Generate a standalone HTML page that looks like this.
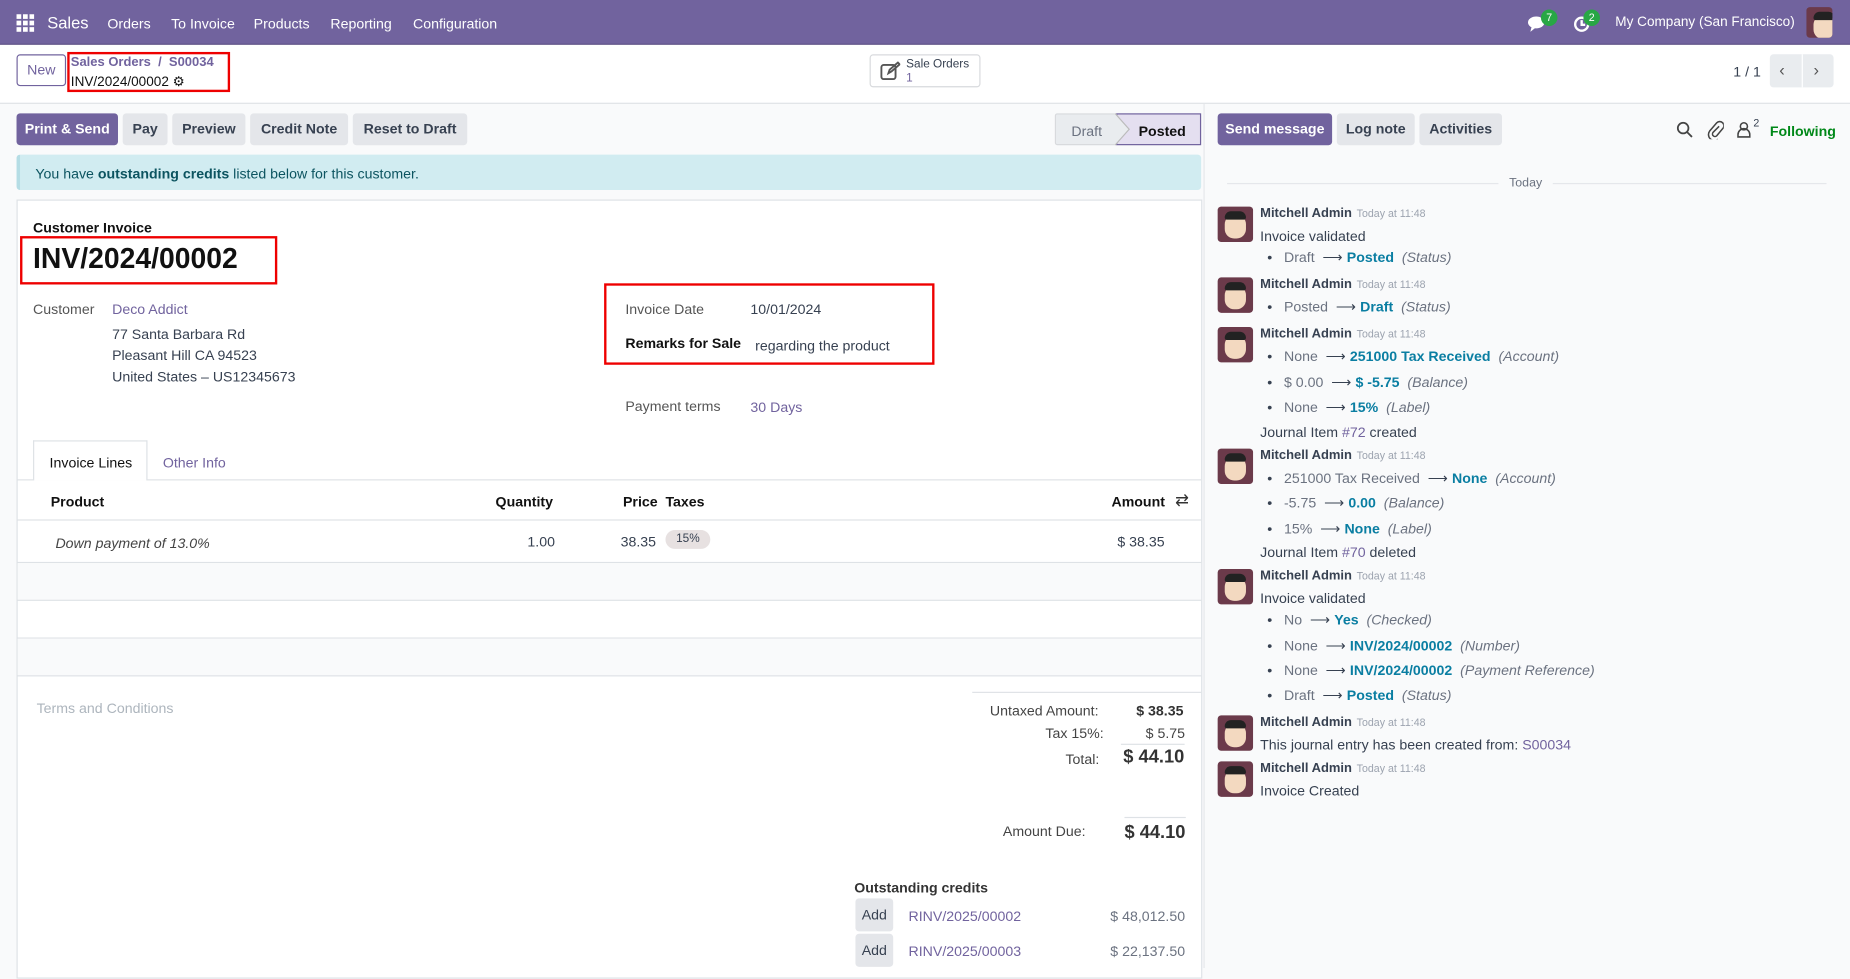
<!DOCTYPE html>
<html><head><meta charset="utf-8"><style>
*{box-sizing:border-box;margin:0;padding:0}
html,body{width:1850px;height:968px;overflow:hidden;background:#f9fafb}
#w{position:absolute;left:0;top:0;width:1568px;height:820px;transform:scale(1.1799,1.1805);transform-origin:0 0;font-family:"Liberation Sans",sans-serif;font-size:12px;color:#374151;background:#f9fafb}
.a{position:absolute;white-space:nowrap}
.nav{left:0;top:0;width:1568px;height:38px;background:#71639e;border-bottom:1px solid #5d5184}
.nav .a{color:#fff;top:13px;font-size:12px}
.btn{position:absolute;height:27px;line-height:27px;border-radius:3px;background:#e4e6ea;color:#374151;font-weight:bold;text-align:center;font-size:12px}
.pri{background:#71639e;color:#fff}
.lnk{color:#71639e}
.teal{color:#0a7ea2;font-weight:bold}
.it{font-style:italic;color:#6b7280}
.grey{color:#6b7280}
.av{position:absolute;left:1032px;width:30px;height:30px;border-radius:3px;background:#6b3a4a;overflow:hidden}
.av:before{content:"";position:absolute;left:6px;top:7px;width:18px;height:20px;border-radius:8px;background:#f3d9c0}
.av:after{content:"";position:absolute;left:6px;top:4px;width:18px;height:7px;border-radius:6px 6px 2px 2px;background:#222}
.nm{font-weight:bold;color:#374151}
.tm{font-size:9px;color:#9ca3af;font-weight:normal;margin-left:4px}
.bul:before{content:"•";margin-right:10px;color:#374151}
.red{position:absolute;border:2px solid #e00}
.hl{position:absolute;left:14px;width:1004px;height:1px;background:#dee2e6}
</style></head><body><div id="w">
<div class="a nav">
 <svg class="a" style="left:14px;top:12px" width="15" height="15" viewBox="0 0 15 15" fill="#fff"><rect x="0" y="0" width="4" height="4"/><rect x="5.5" y="0" width="4" height="4"/><rect x="11" y="0" width="4" height="4"/><rect x="0" y="5.5" width="4" height="4"/><rect x="5.5" y="5.5" width="4" height="4"/><rect x="11" y="5.5" width="4" height="4"/><rect x="0" y="11" width="4" height="4"/><rect x="5.5" y="11" width="4" height="4"/><rect x="11" y="11" width="4" height="4"/></svg>
 <div class="a" style="left:40px;top:11px;font-size:14px">Sales</div>
 <div class="a" style="left:91px">Orders</div>
 <div class="a" style="left:145px">To Invoice</div>
 <div class="a" style="left:215px">Products</div>
 <div class="a" style="left:280px">Reporting</div>
 <div class="a" style="left:350px">Configuration</div>
 <svg class="a" style="left:1295px;top:13px" width="16" height="14" viewBox="0 0 16 14" fill="#fff"><ellipse cx="7" cy="6" rx="7" ry="5"/><path d="M3 10 L2 14 L7 10Z"/></svg>
 <div class="a" style="left:1306px;top:8px;width:14px;height:14px;border-radius:7px;background:#28a745;font-size:9px;text-align:center;line-height:14px">7</div>
 <svg class="a" style="left:1333px;top:13px" width="15" height="15" viewBox="0 0 15 15" fill="none" stroke="#fff" stroke-width="2"><circle cx="7.5" cy="7.5" r="5.5"/><path d="M7.5 4v4h3"/></svg>
 <div class="a" style="left:1342px;top:8px;width:14px;height:14px;border-radius:7px;background:#28a745;font-size:9px;text-align:center;line-height:14px">2</div>
 <div class="a" style="left:1369px;font-size:11.5px">My Company (San Francisco)</div>
 <div class="av" style="left:1531px;top:6px;width:22px;height:26px;position:absolute"></div>
</div>
<div class="a" style="left:0;top:38px;width:1568px;height:50px;background:#fff;border-bottom:1px solid #dee2e6"></div>
<div class="btn" style="left:14px;top:46px;width:42px;height:27px;background:#fff;border:1px solid #71639e;color:#71639e;font-weight:normal;line-height:25px">New</div>
<div class="a lnk" style="left:60px;top:47px;font-size:11px;font-weight:bold">Sales Orders &nbsp;/&nbsp; S00034</div>
<div class="a" style="left:60px;top:62px;font-size:11.5px;color:#111">INV/2024/00002 ⚙</div>
<div class="red" style="left:57px;top:44px;width:138px;height:34px"></div>
<div class="a" style="left:737px;top:46px;width:94px;height:28px;border:1px solid #d8dadd;border-radius:3px;background:#fff"></div>
<svg class="a" style="left:746px;top:52px" width="17" height="16" viewBox="0 0 17 16" fill="none" stroke="#555" stroke-width="1.6"><rect x="1" y="3" width="12" height="12" rx="2"/><path d="M7 10l1-3 7-6 1.5 1.5-7 6z"/></svg>
<div class="a" style="left:768px;top:49px;font-size:10px;line-height:12px">Sale Orders<br><span style="color:#71639e">1</span></div>
<div class="a" style="left:1469px;top:54px">1 / 1</div>
<div class="a" style="left:1500px;top:46px;width:54px;height:28px;background:#e9ecef;border-radius:3px"></div>
<div class="a" style="left:1527px;top:46px;width:1px;height:28px;background:#fff"></div>
<div class="a" style="left:1508px;top:51px;font-size:14px;color:#555">‹</div>
<div class="a" style="left:1537px;top:51px;font-size:14px;color:#555">›</div>

<div class="btn pri" style="left:14px;top:96px;width:86px">Print &amp; Send</div>
<div class="btn" style="left:104px;top:96px;width:38px">Pay</div>
<div class="btn" style="left:146px;top:96px;width:62px">Preview</div>
<div class="btn" style="left:212px;top:96px;width:83px">Credit Note</div>
<div class="btn" style="left:299px;top:96px;width:97px">Reset to Draft</div>
<div class="a" style="left:894px;top:96px;width:124px;height:27px;background:#e9ecef;border:1px solid #d8dadd;border-radius:2px"></div>
<div class="a" style="left:946px;top:96px;width:72px;height:27px;background:#e4dff0;border:1px solid #71639e"></div>
<svg class="a" style="left:945px;top:96px" width="14" height="27"><path d="M0 0 L12 13.5 L0 27" fill="#e9ecef" stroke="#bbb"/></svg>
<div class="a grey" style="left:908px;top:104px">Draft</div>
<div class="a" style="left:965px;top:104px;color:#111;font-weight:bold">Posted</div>

<div class="a" style="left:14px;top:131px;width:1004px;height:30px;background:#d1ecf1;border-left:3px solid #b5dde5;border-radius:3px"></div>
<div class="a" style="left:30px;top:140px;color:#0c5460">You have <b>outstanding credits</b> listed below for this customer.</div>

<div class="a" style="left:14px;top:169px;width:1005px;height:660px;background:#fff;border:1px solid #dee2e6"></div>
<div class="a" style="left:28px;top:186px;font-weight:bold;color:#111">Customer Invoice</div>
<div class="a" style="left:28px;top:206px;font-size:24px;font-weight:bold;color:#111">INV/2024/00002</div>
<div class="red" style="left:17px;top:200px;width:218px;height:41px"></div>
<div class="a" style="left:28px;top:255px;color:#555">Customer</div>
<div class="a lnk" style="left:95px;top:255px">Deco Addict</div>
<div class="a" style="left:95px;top:274px;line-height:18px">77 Santa Barbara Rd<br>Pleasant Hill CA 94523<br>United States – US12345673</div>
<div class="a" style="left:530px;top:255px;color:#555">Invoice Date</div>
<div class="a" style="left:636px;top:255px">10/01/2024</div>
<div class="a" style="left:530px;top:284px;font-weight:bold;color:#111">Remarks for Sale</div>
<div class="a" style="left:640px;top:286px">regarding the product</div>
<div class="red" style="left:512px;top:240px;width:280px;height:69px"></div>
<div class="a" style="left:530px;top:337px;color:#555">Payment terms</div>
<div class="a lnk" style="left:636px;top:338px">30 Days</div>

<div class="hl" style="top:406px"></div>
<div class="a" style="left:28px;top:373px;width:97px;height:34px;background:#fff;border:1px solid #dee2e6;border-bottom:none"></div>
<div class="a" style="left:42px;top:385px;color:#111">Invoice Lines</div>
<div class="a lnk" style="left:138px;top:385px">Other Info</div>
<div class="a" style="left:43px;top:418px;font-weight:bold;color:#111">Product</div>
<div class="a" style="left:420px;top:418px;font-weight:bold;color:#111">Quantity</div>
<div class="a" style="left:528px;top:418px;font-weight:bold;color:#111">Price</div>
<div class="a" style="left:564px;top:418px;font-weight:bold;color:#111">Taxes</div>
<div class="a" style="left:942px;top:418px;font-weight:bold;color:#111">Amount</div>
<div class="a" style="left:996px;top:415px;font-size:14px;color:#333">⇄</div>
<div class="hl" style="top:440px"></div>
<div class="a it" style="left:47px;top:453px;color:#444">Down payment of 13.0%</div>
<div class="a" style="left:447px;top:452px">1.00</div>
<div class="a" style="left:526px;top:452px">38.35</div>
<div class="a" style="left:564px;top:449px;width:38px;height:16px;border-radius:8px;background:#e7e1e1;font-size:10px;text-align:center;line-height:16px">15%</div>
<div class="a" style="left:947px;top:452px">$ 38.35</div>
<div class="hl" style="top:476px"></div>
<div class="a" style="left:15px;top:477px;width:1003px;height:31px;background:#f9fafb"></div>
<div class="hl" style="top:508px"></div>
<div class="hl" style="top:540px"></div>
<div class="a" style="left:15px;top:541px;width:1003px;height:31px;background:#f9fafb"></div>
<div class="hl" style="top:572px"></div>

<div class="a" style="left:31px;top:593px;color:#adb5bd">Terms and Conditions</div>
<div class="a" style="left:824px;top:586px;width:194px;height:1px;background:#dee2e6"></div>
<div class="a" style="left:839px;top:595px;color:#444">Untaxed Amount:</div>
<div class="a" style="left:963px;top:595px;font-weight:bold;color:#333">$ 38.35</div>
<div class="a" style="left:886px;top:614px;color:#444">Tax 15%:</div>
<div class="a" style="left:971px;top:614px;color:#444">$ 5.75</div>
<div class="a" style="left:950px;top:630px;width:54px;height:1px;background:#dee2e6"></div>
<div class="a" style="left:903px;top:636px;color:#444">Total:</div>
<div class="a" style="left:952px;top:633px;font-size:15.5px;font-weight:bold;color:#333">$ 44.10</div>
<div class="a" style="left:953px;top:692px;width:52px;height:1px;background:#dee2e6"></div>
<div class="a" style="left:850px;top:697px;color:#444">Amount Due:</div>
<div class="a" style="left:953px;top:697px;font-size:15.5px;font-weight:bold;color:#333">$ 44.10</div>
<div class="a" style="left:724px;top:745px;font-weight:bold;color:#333">Outstanding credits</div>
<div class="btn" style="left:725px;top:761px;width:32px;height:28px;line-height:28px;font-weight:normal">Add</div>
<div class="a lnk" style="left:770px;top:769px">RINV/2025/00002</div>
<div class="a grey" style="left:941px;top:769px">$ 48,012.50</div>
<div class="btn" style="left:725px;top:791px;width:32px;height:28px;line-height:28px;font-weight:normal">Add</div>
<div class="a lnk" style="left:770px;top:799px">RINV/2025/00003</div>
<div class="a grey" style="left:941px;top:799px">$ 22,137.50</div>

<!-- chatter -->
<div class="a" style="left:1020px;top:88px;width:1px;height:732px;background:#e5e7eb"></div>
<div class="btn pri" style="left:1032px;top:96px;width:97px">Send message</div>
<div class="btn" style="left:1133px;top:96px;width:66px">Log note</div>
<div class="btn" style="left:1203px;top:96px;width:70px">Activities</div>
<svg class="a" style="left:1421px;top:103px" width="14" height="14" viewBox="0 0 14 14" fill="none" stroke="#444" stroke-width="1.5"><circle cx="5.5" cy="5.5" r="4.5"/><path d="M9 9l4 4"/></svg>
<svg class="a" style="left:1447px;top:102px" width="14" height="16" viewBox="0 0 14 16" fill="none" stroke="#444" stroke-width="1.3"><path d="M10 5L5 10a2 2 0 0 0 3 3l5-6a3.5 3.5 0 0 0-5-5L2 9a5 5 0 0 0 7 7"/></svg>
<svg class="a" style="left:1472px;top:103px" width="12" height="14" viewBox="0 0 12 14" fill="none" stroke="#444" stroke-width="1.3"><circle cx="6" cy="4" r="3"/><path d="M1 13v-2a4 4 0 0 1 10 0v2z"/></svg>
<div class="a" style="left:1486px;top:99px;font-size:9px">2</div>
<div class="a" style="left:1500px;top:104px;color:#008818;font-weight:bold">Following</div>
<div class="a" style="left:1040px;top:155px;width:230px;height:1px;background:#e5e7eb"></div>
<div class="a" style="left:1316px;top:155px;width:232px;height:1px;background:#e5e7eb"></div>
<div class="a grey" style="left:1279px;top:149px;font-size:10.5px">Today</div>

<div class="av" style="top:175px"></div>
<div class="a nm" style="left:1068px;top:175px;font-size:11px">Mitchell Admin<span class="tm">Today at 11:48</span></div>
<div class="a" style="left:1068px;top:193px">Invoice validated</div>
<div class="a bul" style="left:1074px;top:211px"><span class="grey">Draft</span> &nbsp;⟶ <span class="teal">Posted</span> &nbsp;<span class="it">(Status)</span></div>

<div class="av" style="top:235px"></div>
<div class="a nm" style="left:1068px;top:235px;font-size:11px">Mitchell Admin<span class="tm">Today at 11:48</span></div>
<div class="a bul" style="left:1074px;top:253px"><span class="grey">Posted</span> &nbsp;⟶ <span class="teal">Draft</span> &nbsp;<span class="it">(Status)</span></div>

<div class="av" style="top:277px"></div>
<div class="a nm" style="left:1068px;top:277px;font-size:11px">Mitchell Admin<span class="tm">Today at 11:48</span></div>
<div class="a bul" style="left:1074px;top:295px"><span class="grey">None</span> &nbsp;⟶ <span class="teal">251000 Tax Received</span> &nbsp;<span class="it">(Account)</span></div>
<div class="a bul" style="left:1074px;top:317px"><span class="grey">$ 0.00</span> &nbsp;⟶ <span class="teal">$ -5.75</span> &nbsp;<span class="it">(Balance)</span></div>
<div class="a bul" style="left:1074px;top:338px"><span class="grey">None</span> &nbsp;⟶ <span class="teal">15%</span> &nbsp;<span class="it">(Label)</span></div>
<div class="a" style="left:1068px;top:359px">Journal Item <span class="lnk">#72</span> created</div>

<div class="av" style="top:380px"></div>
<div class="a nm" style="left:1068px;top:380px;font-size:11px">Mitchell Admin<span class="tm">Today at 11:48</span></div>
<div class="a bul" style="left:1074px;top:398px"><span class="grey">251000 Tax Received</span> &nbsp;⟶ <span class="teal">None</span> &nbsp;<span class="it">(Account)</span></div>
<div class="a bul" style="left:1074px;top:419px"><span class="grey">-5.75</span> &nbsp;⟶ <span class="teal">0.00</span> &nbsp;<span class="it">(Balance)</span></div>
<div class="a bul" style="left:1074px;top:441px"><span class="grey">15%</span> &nbsp;⟶ <span class="teal">None</span> &nbsp;<span class="it">(Label)</span></div>
<div class="a" style="left:1068px;top:461px">Journal Item <span class="lnk">#70</span> deleted</div>

<div class="av" style="top:482px"></div>
<div class="a nm" style="left:1068px;top:482px;font-size:11px">Mitchell Admin<span class="tm">Today at 11:48</span></div>
<div class="a" style="left:1068px;top:500px">Invoice validated</div>
<div class="a bul" style="left:1074px;top:518px"><span class="grey">No</span> &nbsp;⟶ <span class="teal">Yes</span> &nbsp;<span class="it">(Checked)</span></div>
<div class="a bul" style="left:1074px;top:540px"><span class="grey">None</span> &nbsp;⟶ <span class="teal">INV/2024/00002</span> &nbsp;<span class="it">(Number)</span></div>
<div class="a bul" style="left:1074px;top:561px"><span class="grey">None</span> &nbsp;⟶ <span class="teal">INV/2024/00002</span> &nbsp;<span class="it">(Payment Reference)</span></div>
<div class="a bul" style="left:1074px;top:582px"><span class="grey">Draft</span> &nbsp;⟶ <span class="teal">Posted</span> &nbsp;<span class="it">(Status)</span></div>

<div class="av" style="top:606px"></div>
<div class="a nm" style="left:1068px;top:606px;font-size:11px">Mitchell Admin<span class="tm">Today at 11:48</span></div>
<div class="a" style="left:1068px;top:624px">This journal entry has been created from: <span class="lnk">S00034</span></div>

<div class="av" style="top:645px"></div>
<div class="a nm" style="left:1068px;top:645px;font-size:11px">Mitchell Admin<span class="tm">Today at 11:48</span></div>
<div class="a" style="left:1068px;top:663px">Invoice Created</div>
</div></body></html>
